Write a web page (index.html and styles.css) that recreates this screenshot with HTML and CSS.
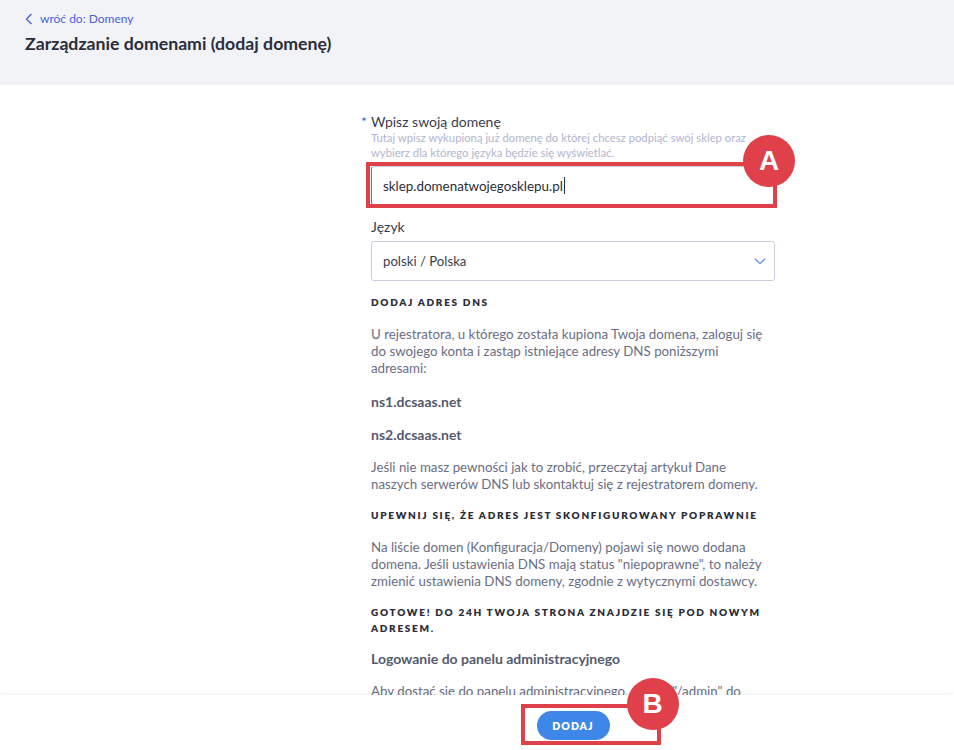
FILE: index.html
```html
<!DOCTYPE html>
<html lang="pl">

<head>
    <meta charset="UTF-8">
    <title>Zarządzanie domenami</title>
    <link rel="stylesheet" href="styles.css">
</head>

<body>
    <div id="top">
        <a class="back" href="#">
            <svg width="8" height="12" viewBox="0 0 8 12"><path d="M6.5 1 L1.5 6 L6.5 11" fill="none" stroke="#4b62d6" stroke-width="1.4"/></svg>
            wróć do: Domeny
        </a>
        <h1 class="title">Zarządzanie domenami (dodaj domenę)</h1>
    </div>

    <div id="main">
        <div class="form">
            <div class="field">
                <label class="label"><span class="req">*</span>Wpisz swoją domenę</label>
                <div class="hint">Tutaj wpisz wykupioną już domenę do której chcesz podpiąć swój sklep oraz wybierz dla którego języka będzie się wyświetlać.</div>
                <div class="input-wrap">
                    <div class="input">sklep.domenatwojegosklepu.pl<span class="caret"></span></div>
                    <div class="mark-box mark-a"></div>
                    <div class="mark-dot dot-a">A</div>
                </div>
            </div>

            <div class="field">
                <label class="label">Język</label>
                <div class="select">
                    <span>polski / Polska</span>
                    <svg width="12" height="7" viewBox="0 0 12 7"><path d="M1 1 L6 5.5 L11 1" fill="none" stroke="#5b8fe6" stroke-width="1.3"/></svg>
                </div>
            </div>

            <h3 class="step">Dodaj adres DNS</h3>
            <p>U rejestratora, u którego została kupiona Twoja domena, zaloguj się do swojego konta i zastąp istniejące adresy DNS poniższymi adresami:</p>
            <p class="strong">ns1.dcsaas.net</p>
            <p class="strong">ns2.dcsaas.net</p>
            <p>Jeśli nie masz pewności jak to zrobić, przeczytaj artykuł Dane naszych serwerów DNS lub skontaktuj się z rejestratorem domeny.</p>

            <h3 class="step">Upewnij się, że adres jest skonfigurowany poprawnie</h3>
            <p>Na liście domen (Konfiguracja/Domeny) pojawi się nowo dodana domena. Jeśli ustawienia DNS mają status "niepoprawne", to należy zmienić ustawienia DNS domeny, zgodnie z wytycznymi dostawcy.</p>

            <h3 class="step">Gotowe! Do 24h Twoja strona znajdzie się pod nowym adresem.</h3>
            <p class="strong">Logowanie do panelu administracyjnego</p>
            <p>Aby dostać się do panelu administracyjnego, dopisz "/admin" do adresu swojego sklepu, np. sklep.domenatwojegosklepu.pl/admin</p>
        </div>
    </div>

    <div id="footer">
        <div class="footer-inner">
            <div class="btn-wrap">
                <button class="btn">DODAJ</button>
                <div class="mark-box mark-b"></div>
                <div class="mark-dot dot-b">B</div>
            </div>
        </div>
    </div>
</body>

</html>
```

FILE: styles.css
```css
body,
h1,
h3,
p {
    margin: 0;
    padding: 0;
}

body {
    font-family: Lato, "Liberation Sans", sans-serif;
    font-size: 13.3px;
    color: #6a6e84;
    background-color: #fff;
}

#top {
    height: 85px;
    box-sizing: border-box;
    background-color: #f2f3f7;
    padding: 11px 25px 0;
}

.back {
    display: flex;
    align-items: center;
    gap: 7px;
    font-size: 12px;
    line-height: 15px;
    color: #4b62d6;
    text-decoration: none;
}

.title {
    margin-top: 7px;
    font-size: 17.7px;
    line-height: 22px;
    font-weight: 700;
    color: #2b2d3a;
}

#main {
    padding: 28px 0 80px;
}

.form {
    width: 404px;
    margin-left: 371px;
}

.field {
    margin-bottom: 13px;
}

.label {
    display: block;
    position: relative;
    font-size: 14px;
    line-height: 17px;
    color: #3a3d4f;
}

.req {
    position: absolute;
    left: -10px;
    color: #4b62d6;
}

.hint {
    font-size: 11.3px;
    line-height: 15px;
    color: #b1b5d0;
    margin-bottom: 6px;
}

.input-wrap {
    position: relative;
}

.input {
    height: 39px;
    box-sizing: border-box;
    border: 1px solid #c9cde0;
    border-left-color: #4b7be0;
    border-radius: 3px;
    padding: 0 11px;
    display: flex;
    align-items: center;
    font-size: 13.4px;
    color: #2b2d3a;
}

.caret {
    display: inline-block;
    width: 1px;
    height: 17px;
    background-color: #2b2d3a;
    margin-left: 1px;
}

.select {
    margin-top: 6px;
    height: 40px;
    box-sizing: border-box;
    border: 1px solid #c9cde0;
    border-radius: 3px;
    padding: 0 8px 0 11px;
    display: flex;
    align-items: center;
    justify-content: space-between;
    font-size: 13.2px;
    color: #3a3d4f;
}

.step {
    font-size: 10px;
    line-height: 16px;
    font-weight: 800;
    letter-spacing: 1.7px;
    text-transform: uppercase;
    color: #2b2d3a;
    margin: 0 0 16px;
}

p {
    line-height: 17px;
    margin-bottom: 16px;
}

p.strong {
    font-size: 14px;
    font-weight: 700;
    color: #565a6e;
}

p + .step {
    margin-top: -2px;
}

.step + p.strong {
    margin-top: -2px;
}

#footer {
    position: fixed;
    left: 0;
    right: 0;
    bottom: 0;
    height: 55px;
    background-color: #fff;
    box-shadow: 0 -2px 4px rgba(0, 0, 0, 0.05);
}

.footer-inner {
    width: 404px;
    margin-left: 371px;
    display: flex;
    justify-content: center;
    padding-top: 16px;
}

.btn-wrap {
    position: relative;
}

.btn {
    display: block;
    width: 73px;
    height: 29px;
    border: none;
    border-radius: 15px;
    background-color: #3e86e8;
    color: #fff;
    font-family: Lato, "Liberation Sans", sans-serif;
    font-size: 10.5px;
    font-weight: 800;
    letter-spacing: 1px;
}

/* annotation markers */
.mark-box {
    position: absolute;
    border: 4px solid #e0404a;
}

.mark-a {
    left: -5px;
    top: -4px;
    right: -2px;
    bottom: -3px;
}

.mark-b {
    left: -16px;
    top: -7px;
    width: 132px;
    height: 33px;
}

.mark-dot {
    position: absolute;
    width: 52px;
    height: 52px;
    border-radius: 50%;
    background-color: #e0404a;
    color: #fff;
    font-family: "Liberation Sans", sans-serif;
    font-weight: 700;
    font-size: 28px;
    display: flex;
    align-items: center;
    justify-content: center;
}

.dot-a {
    left: 372px;
    top: -31px;
}

.dot-b {
    left: 90px;
    top: -33px;
}
```
